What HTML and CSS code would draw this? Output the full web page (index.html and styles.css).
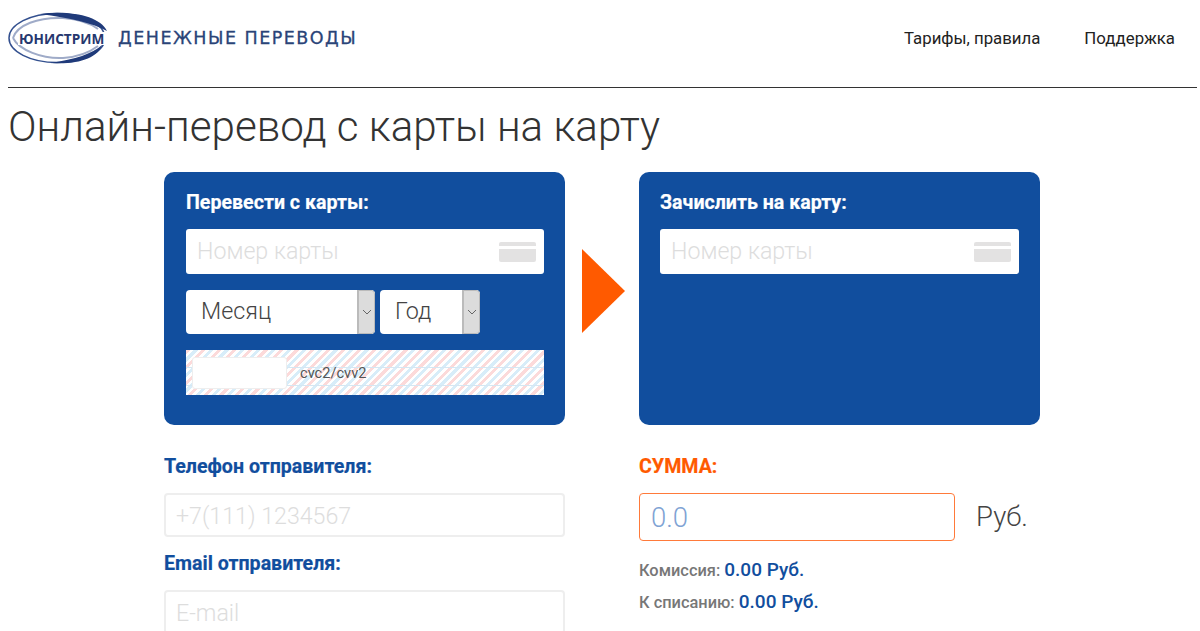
FILE: index.html
```html
<!DOCTYPE html>
<html lang="en">
<head>
    <meta charset="UTF-8">
    <meta name="viewport" content="width=device-width, initial-scale=1.0">
    <title>Юнистрим - Денежные переводы</title>
    <link rel="stylesheet" href="styles.css">
</head>
<body>
    <!-- Header -->
    <div class="header">
        <a href="#" class="logo">
            <svg class="logo-mark" width="100" height="52" viewBox="0 0 100 52">
                <ellipse cx="49" cy="26" rx="48" ry="24.5" fill="none" stroke="#33508f" stroke-width="1.5"/>
                <path d="M5 26 C9 13 30 5 55 6 C70 7 82 11 90 17" fill="none" stroke="#9fabc8" stroke-width="2"/>
                <path d="M5 26 C11 38 34 47 55 46 C70 45 82 40 90 34" fill="none" stroke="#9fabc8" stroke-width="2"/>
                <path d="M32 2 C62 -2 92 4 99 19 C85 11 62 6 32 2 Z" fill="#1f3a7a"/>
                <path d="M42 51 C70 53 90 46 94 33 C84 42 68 47 42 51 Z" fill="#1f3a7a"/>
                <rect x="10" y="20" width="90" height="13" fill="#fff"/>
                <text x="11" y="31.5" class="logo-name">ЮНИСТРИМ</text>
            </svg>
            <span class="logo-text">ДЕНЕЖНЫЕ ПЕРЕВОДЫ</span>
        </a>
        <div class="nav">
            <a href="#">Тарифы, правила</a>
            <a href="#">Поддержка</a>
        </div>
    </div>

    <h1 class="page-title">Онлайн-перевод с карты на карту</h1>

    <!-- Cards -->
    <div class="cards">
        <div class="card card-from">
            <div class="card-title">Перевести с карты:</div>
            <div class="card-number">
                <input type="text" placeholder="Номер карты">
                <span class="card-icon"></span>
            </div>
            <div class="expiry">
                <div class="select select-month">
                    <span>Месяц</span>
                    <span class="select-btn"><svg width="10" height="6" viewBox="0 0 10 6"><path d="M1 1l4 4 4-4" fill="none" stroke="#666" stroke-width="1"/></svg></span>
                </div>
                <div class="select select-year">
                    <span>Год</span>
                    <span class="select-btn"><svg width="10" height="6" viewBox="0 0 10 6"><path d="M1 1l4 4 4-4" fill="none" stroke="#666" stroke-width="1"/></svg></span>
                </div>
            </div>
            <div class="cvc">
                <input type="text">
                <span>cvc2/cvv2</span>
            </div>
        </div>

        <div class="arrow"></div>

        <div class="card">
            <div class="card-title">Зачислить на карту:</div>
            <div class="card-number">
                <input type="text" placeholder="Номер карты">
                <span class="card-icon"></span>
            </div>
        </div>
    </div>

    <!-- Sender and amount -->
    <div class="details">
        <div class="sender">
            <label>Телефон отправителя:</label>
            <input type="text" placeholder="+7(111) 1234567">
            <label>Email отправителя:</label>
            <input type="text" placeholder="E-mail">
        </div>
        <div class="amount">
            <label>СУММА:</label>
            <div class="amount-row">
                <input type="text" placeholder="0.0">
                <span>Руб.</span>
            </div>
            <div class="fee">Комиссия: <b>0.00 Руб.</b></div>
            <div class="fee">К списанию: <b>0.00 Руб.</b></div>
        </div>
    </div>
</body>
</html>
```

FILE: styles.css
```css
* {
    margin: 0;
    padding: 0;
    box-sizing: border-box;
}
html, body {
    height: 631px;
    overflow: hidden;
}
body {
    font-family: 'Roboto', sans-serif;
    background: white;
    color: #333;
}
a {
    color: inherit;
    text-decoration: none;
}
input {
    font-family: inherit;
    font-weight: 300;
    outline: none;
}
.header {
    display: flex;
    justify-content: space-between;
    align-items: center;
    height: 88px;
    margin: 0 3px 0 8px;
    padding-bottom: 12px;
    border-bottom: 1px solid #333;
}
.logo {
    display: flex;
    align-items: center;
    gap: 10px;
}
.logo-name {
    font-family: 'Open Sans', sans-serif;
    font-size: 13.6px;
    font-weight: 700;
    fill: #26376e;
}
.logo-text {
    font-family: 'DejaVu Sans', sans-serif;
    font-size: 17.5px;
    -webkit-text-stroke: 0.3px #2a4478;
    letter-spacing: 1.5px;
    color: #2a4478;
}
.nav {
    display: flex;
    gap: 44px;
    padding-right: 22px;
    font-size: 16.8px;
    color: #222;
}
.page-title {
    margin: 12px 0 0 8px;
    height: 72px;
    font-size: 42.15px;
    line-height: 54px;
    font-weight: 300;
    color: #333;
}
.cards {
    display: flex;
    margin-left: 164px;
    width: 876px;
}
.card {
    width: 401px;
    height: 253px;
    padding: 20px 21px 0 21px;
    background: #114e9e;
    border-radius: 10px;
}
.card-from {
    padding-left: 22px;
}
.card-title {
    font-size: 19.6px;
    line-height: 22px;
    font-weight: 700;
    -webkit-text-stroke: 0.2px white;
    color: white;
}
.card-number {
    display: flex;
    align-items: center;
    height: 45px;
    margin-top: 15px;
    padding-right: 8px;
    background: white;
    border-radius: 3px;
}
.card-number input {
    flex: 1;
    min-width: 0;
    padding: 0 0 2px 11px;
    border: none;
    background: none;
    font-size: 23.2px;
}
.card-number input::placeholder {
    color: #ddd;
}
.card-icon {
    width: 37px;
    height: 20px;
    background: linear-gradient(#e3e2e2 4px, white 4px, white 7px, #e3e2e2 7px);
    border-radius: 2px;
}
.arrow {
    flex: none;
    width: 0;
    height: 0;
    margin: 77px 14px 0 17px;
    border-top: 42.5px solid transparent;
    border-bottom: 42.5px solid transparent;
    border-left: 43px solid #ff5a00;
}
.expiry {
    display: flex;
    gap: 5px;
    margin-top: 16px;
}
.select {
    display: flex;
    justify-content: space-between;
    height: 44px;
    background: white;
    border-radius: 4px;
    font-size: 23.3px;
    font-weight: 300;
    line-height: 43px;
    color: #444;
    overflow: hidden;
}
.select-month {
    width: 189px;
    padding-left: 15px;
}
.select-year {
    width: 100px;
    padding-left: 15px;
}
.select-btn {
    display: flex;
    align-items: center;
    justify-content: center;
    width: 18px;
    background: #dcdcdc;
    border: 1px solid #bbb;
    border-left-width: 2px;
    border-radius: 0 4px 4px 0;
}
.cvc {
    display: flex;
    align-items: center;
    gap: 13px;
    height: 45px;
    margin-top: 16px;
    padding-left: 6px;
    font-size: 14.6px;
    color: #555;
    background:
        linear-gradient(transparent 17px, #d5e7f3 17px, #d5e7f3 18px, transparent 18px, transparent 35px, #d5e7f3 35px, #d5e7f3 36px, transparent 36px),
        repeating-linear-gradient(135deg, #fcdada 0, #fcdada 3px, white 3px, white 5.5px, #d8edf9 5.5px, #d8edf9 8.5px, white 8.5px, white 11px);
}
.cvc input {
    width: 95px;
    height: 32px;
    border: 1px solid #eee;
    border-radius: 3px;
    background: white;
}
.details {
    display: flex;
    gap: 74px;
    margin: 31px 0 0 164px;
}
.sender {
    width: 401px;
}
.details label {
    display: block;
    font-size: 19.6px;
    line-height: 22px;
    font-weight: 700;
    -webkit-text-stroke: 0.2px currentColor;
    color: #114e9e;
}
.sender input {
    display: block;
    width: 100%;
    height: 44px;
    margin: 15px 0 16px;
    padding: 1px 0 0 10px;
    border: 2px solid #eee;
    border-radius: 4px;
    font-size: 23.2px;
}
.sender input::placeholder {
    color: #ddd;
}
.amount label {
    color: #ff5a00;
}
.amount-row {
    display: flex;
    align-items: center;
    gap: 21px;
    margin-top: 15px;
    font-size: 27.5px;
    font-weight: 300;
    color: #444;
}
.amount-row span {
    margin-top: -2px;
}
.amount-row input {
    width: 316px;
    height: 48px;
    padding-left: 11px;
    border: 1px solid #ff7a3a;
    border-radius: 4px;
    font-size: 27.5px;
}
.amount-row input::placeholder {
    color: #7fa3d4;
}
.fee {
    margin-top: 7px;
    font-size: 16.4px;
    line-height: 24px;
    font-weight: 500;
    color: #777;
}
.amount-row + .fee {
    margin-top: 17px;
}
.fee b {
    font-size: 19px;
    font-weight: 500;
    color: #114e9e;
}
```
